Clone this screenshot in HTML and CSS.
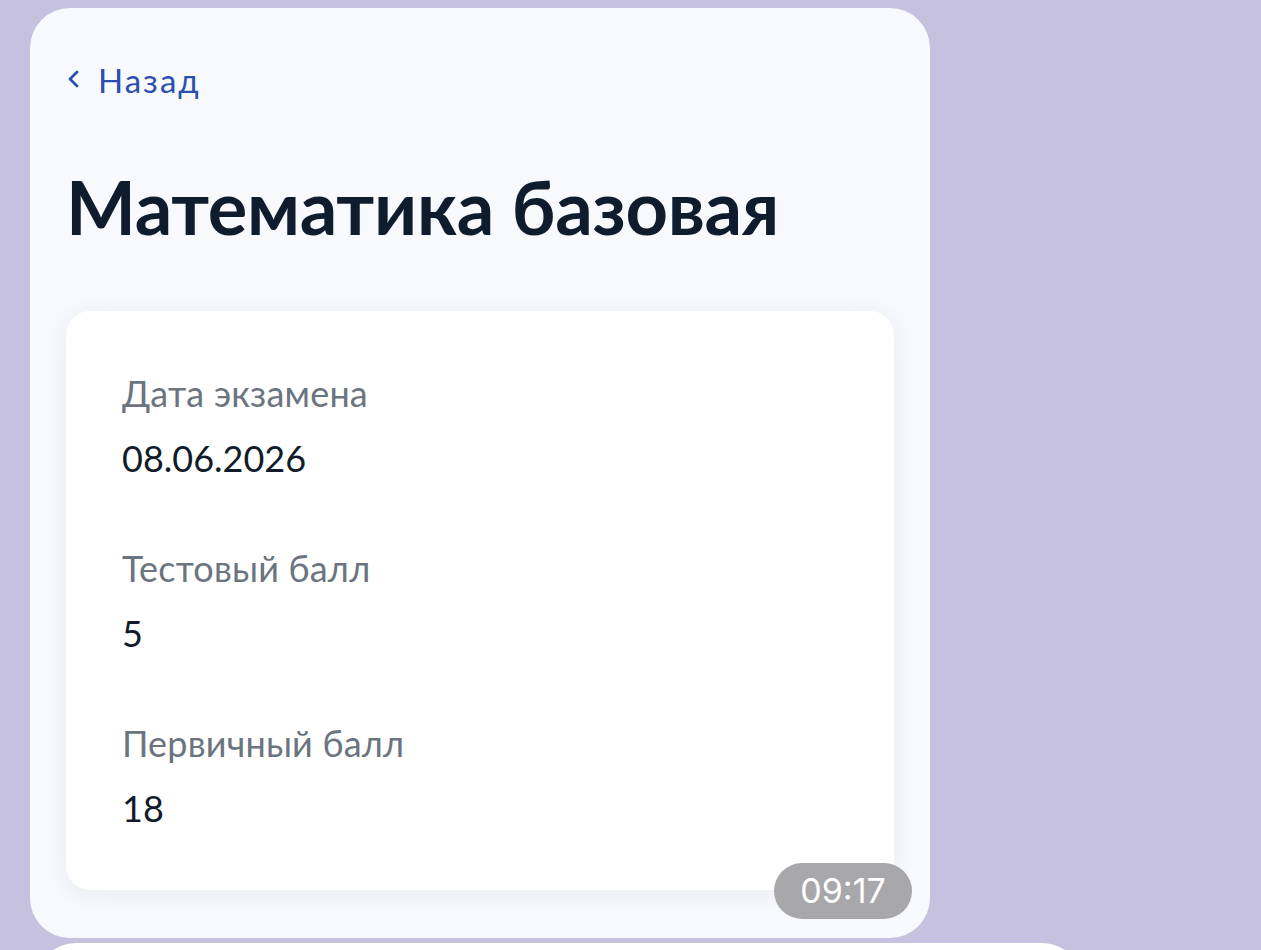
FILE: index.html
```html
<html lang="ru">
<head>
    <meta charset="UTF-8">
    <meta name="viewport" content="width=device-width, initial-scale=1.0">
    <title>Математика базовая</title>
    <link rel="stylesheet" href="styles.css">
</head>
<body>
    <div class="chat">
        <div class="bubble">
            <a class="back" href="javascript:;">
                <svg class="back-icon" width="14" height="20" viewBox="0 0 14 20">
                    <path d="M11 3 L4 10 L11 17" fill="none" stroke="#2b4fae" stroke-width="2.8" stroke-linecap="round" stroke-linejoin="round"/>
                </svg>
                <span>Назад</span>
            </a>
            <h1 class="title">Математика базовая</h1>
            <div class="card">
                <div class="row">
                    <div class="label">Дата экзамена</div>
                    <div class="value">08.06.2026</div>
                </div>
                <div class="row">
                    <div class="label">Тестовый балл</div>
                    <div class="value">5</div>
                </div>
                <div class="row">
                    <div class="label">Первичный балл</div>
                    <div class="value">18</div>
                </div>
            </div>
            <!-- время сообщения -->
            <div class="time">09:17</div>
        </div>
        <div class="bubble-next"></div>
    </div>
</body>
</html>
```

FILE: styles.css
```css
*{
    margin: 0;
    padding: 0;
    box-sizing: border-box;
}
body{
    background-color: #c5c1de;
    font-family: Lato, "Noto Sans", sans-serif;
    overflow: hidden;
}
.chat{
    padding: 8px 0 0 30px;
}
.bubble{
    position: relative;
    width: 900px;
    height: 930px;
    background-color: #f8f9fd;
    border-radius: 40px;
    padding: 52px 36px 0;
}
.back{
    display: flex;
    align-items: center;
    height: 40px;
    color: #2b4fae;
    text-decoration: none;
    font-size: 33px;
    line-height: 40px;
    letter-spacing: 2px;
}
.back-icon{
    margin-left: 0;
    margin-right: 18px;
    margin-top: -2px;
}
.title{
    margin-top: 63px;
    font-size: 74px;
    line-height: 88px;
    font-weight: 700;
    color: #0f1c2e;
    letter-spacing: -0.3px;
}
.card{
    margin-top: 60px;
    background-color: #fff;
    border-radius: 24px;
    padding: 60px 56px 60px;
    box-shadow: 0 4px 22px rgba(40, 50, 90, 0.07);
}
.row + .row{
    margin-top: 66px;
}
.label{
    font-size: 36px;
    line-height: 44px;
    color: #6c7480;
    margin-bottom: 21px;
    letter-spacing: 0.2px;
}
.value{
    font-size: 36px;
    line-height: 44px;
    color: #111b29;
}
.time{
    position: absolute;
    right: 18px;
    bottom: 19px;
    width: 138px;
    height: 56px;
    border-radius: 28px;
    background-color: #a8a8ab;
    color: #fff;
    font-family: Inter, sans-serif;
    font-size: 34px;
    line-height: 56px;
    text-align: center;
}
.bubble-next{
    margin: 5px 0 0 6px;
    width: 1046px;
    height: 200px;
    background-color: #fff;
    border-radius: 40px;
}
```
